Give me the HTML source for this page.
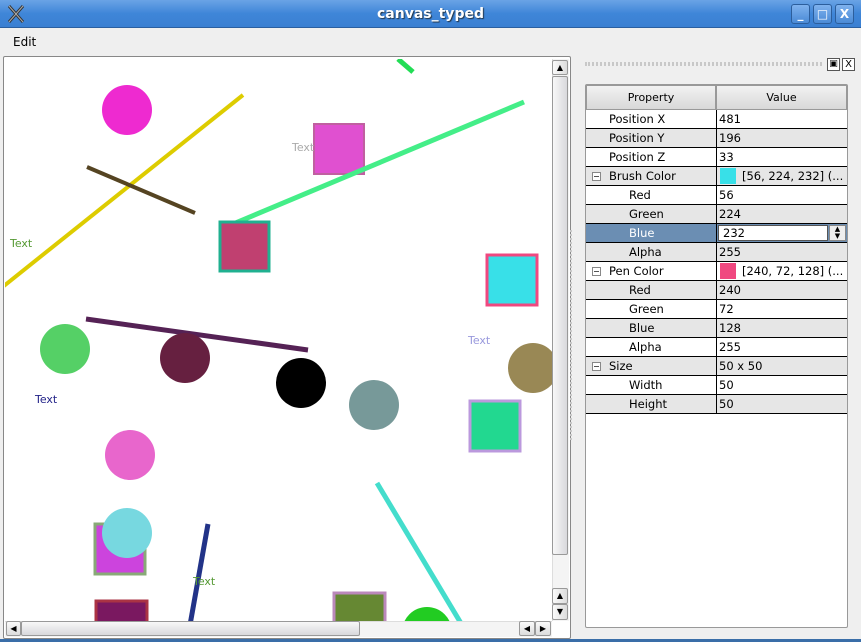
<!DOCTYPE html>
<html><head><style>
*{margin:0;padding:0;box-sizing:border-box}
body{width:861px;height:642px;background:#efefef;font-family:"DejaVu Sans","Liberation Sans",sans-serif;font-size:11px;position:relative;overflow:hidden}
.abs{position:absolute}
#title{left:0;top:0;width:861px;height:28px;background:linear-gradient(#6aa3e6,#3f86d8 50%,#3a7fd2);border-bottom:1px solid #2a5fa0}
#title .t{position:absolute;left:0;right:0;top:6px;text-align:center;color:#fff;font-weight:bold;font-size:14px;text-shadow:1px 1px 1px #234}
.wb{position:absolute;top:4px;width:19px;height:20px;border:1px solid #2c5e9c;border-radius:3px;background:linear-gradient(#7fb2ee,#4a8ad6);color:#fff;font-size:12px;text-align:center;line-height:18px;font-weight:bold}
#menu{left:0;top:28px;width:861px;height:28px;font-size:12px}
.grid{left:585px;top:84px;width:263px;height:544px;background:#fff;border:1px solid #999;border-radius:2px}
.row{position:absolute;left:0;width:261px;height:19px;border-bottom:1px solid #000;font-size:11.5px;line-height:18px}
.row .p{position:absolute;left:0;width:130px;height:18px}
.row .v{position:absolute;left:130px;width:131px;height:18px;border-left:1px solid #000;padding-left:2px}
.g{background:#e6e6e6}
.ex{position:absolute;left:6px;top:5px;width:9px;height:9px;border:1px solid #888;background:#fff}
.ex:after{content:"";position:absolute;left:1px;top:3px;width:5px;height:1px;background:#555}
.sw{display:inline-block;width:16px;height:16px;vertical-align:top;margin:1px 6px 0 1px}
</style></head><body>
<div id="title" class="abs">
<svg class="abs" style="left:6px;top:4px" width="20" height="20"><path d="M3 2 L17 18 M17 2 L3 18" stroke="#333" stroke-width="3"/><path d="M3 2 L17 18 M17 2 L3 18" stroke="#aaa" stroke-width="1"/></svg>
<div class="t">canvas_typed</div>
<div class="wb" style="left:791px">_</div><div class="wb" style="left:813px">□</div><div class="wb" style="left:835px">X</div>
</div>
<div id="menu" class="abs"><span class="abs" style="left:13px;top:7px">Edit</span></div>
<div class="abs" style="left:3px;top:56px;width:568px;height:583px;border:1px solid #888;border-radius:2px;background:#fff"></div>
<svg class="abs" style="left:5px;top:59px" width="547" height="562">
<g transform="translate(-5,-59)">
<line x1="398" y1="59" x2="413" y2="72" stroke="#22dd55" stroke-width="5"/>
<circle cx="127" cy="110" r="25" fill="#ee2ad0"/>
<line x1="0" y1="289" x2="243" y2="95" stroke="#ddcc00" stroke-width="4"/>
<rect x="314" y="124" width="50" height="50" fill="#e050d0" stroke="#c060a0" stroke-width="2"/>
<text x="292" y="151" fill="#aaa" font-size="11" font-family="DejaVu Sans">Text</text>
<line x1="233" y1="224" x2="524" y2="102" stroke="#44ee88" stroke-width="5"/>
<line x1="87" y1="167" x2="195" y2="213" stroke="#554422" stroke-width="4"/>
<rect x="220" y="222" width="49" height="49" fill="#c04070" stroke="#20b090" stroke-width="3"/>
<text x="10" y="247" fill="#559933" font-size="11" font-family="DejaVu Sans">Text</text>
<rect x="487" y="255" width="50" height="50" fill="#38e0e8" stroke="#f04880" stroke-width="3"/>
<line x1="86" y1="319" x2="308" y2="350" stroke="#552255" stroke-width="5"/>
<circle cx="65" cy="349" r="25" fill="#55d066"/>
<circle cx="185" cy="358" r="25" fill="#662040"/>
<circle cx="301" cy="383" r="25" fill="#000"/>
<circle cx="374" cy="405" r="25" fill="#779999"/>
<text x="468" y="344" fill="#9999dd" font-size="11" font-family="DejaVu Sans">Text</text>
<circle cx="533" cy="368" r="25" fill="#998855"/>
<text x="35" y="403" fill="#222288" font-size="11" font-family="DejaVu Sans">Text</text>
<rect x="470" y="401" width="50" height="50" fill="#22d890" stroke="#bb99dd" stroke-width="3"/>
<circle cx="130" cy="455" r="25" fill="#e866cc"/>
<line x1="377" y1="483" x2="462" y2="625" stroke="#44ddcc" stroke-width="5"/>
<rect x="95" y="524" width="50" height="50" fill="#cc44dd" stroke="#88aa77" stroke-width="3"/>
<circle cx="127" cy="533" r="25" fill="#77d8e0"/>
<line x1="208" y1="524" x2="190" y2="625" stroke="#223388" stroke-width="5"/>
<text x="193" y="585" fill="#559933" font-size="11" font-family="DejaVu Sans">Text</text>
<rect x="96" y="601" width="51" height="40" fill="#7a1860" stroke="#aa3344" stroke-width="3"/>
<rect x="334" y="593" width="51" height="40" fill="#668833" stroke="#bb88bb" stroke-width="3"/>
<circle cx="427" cy="632" r="25" fill="#22cc22"/>
</g></svg>
<!-- vertical scrollbar -->
<div class="abs" style="left:552px;top:59px;width:17px;height:562px;background:#f4f4f4;border-left:1px solid #ddd"></div>
<div class="abs" style="left:552px;top:60px;width:16px;height:15px;border:1px solid #999;border-radius:2px;background:linear-gradient(90deg,#fafafa,#dcdcdc);font-size:8px;text-align:center;line-height:13px">▲</div>
<div class="abs" style="left:552px;top:76px;width:16px;height:479px;border:1px solid #999;border-radius:2px;background:linear-gradient(90deg,#f8f8f8,#d8d8dc)"></div>
<div class="abs" style="left:552px;top:588px;width:16px;height:16px;border:1px solid #999;border-radius:2px;background:linear-gradient(90deg,#fafafa,#dcdcdc);font-size:8px;text-align:center;line-height:14px">▲</div>
<div class="abs" style="left:552px;top:604px;width:16px;height:16px;border:1px solid #999;border-radius:2px;background:linear-gradient(90deg,#fafafa,#dcdcdc);font-size:8px;text-align:center;line-height:14px">▼</div>
<!-- horizontal scrollbar -->
<div class="abs" style="left:5px;top:621px;width:547px;height:16px;background:#f4f4f4;border-top:1px solid #ddd"></div>
<div class="abs" style="left:6px;top:621px;width:15px;height:15px;border:1px solid #999;border-radius:2px;background:linear-gradient(#fafafa,#dcdcdc);font-size:8px;text-align:center;line-height:13px">◀</div>
<div class="abs" style="left:21px;top:621px;width:339px;height:15px;border:1px solid #999;border-radius:2px;background:linear-gradient(#f8f8f8,#d8d8dc)"></div>
<div class="abs" style="left:519px;top:621px;width:16px;height:15px;border:1px solid #999;border-radius:2px;background:linear-gradient(#fafafa,#dcdcdc);font-size:8px;text-align:center;line-height:13px">◀</div>
<div class="abs" style="left:535px;top:621px;width:16px;height:15px;border:1px solid #999;border-radius:2px;background:linear-gradient(#fafafa,#dcdcdc);font-size:8px;text-align:center;line-height:13px">▶</div>
<!-- dock -->
<div class="abs" style="left:585px;top:62px;width:237px;height:4px;border-top:2px dotted #c8c8c8;border-bottom:2px dotted #c8c8c8"></div>
<div class="abs" style="left:570px;top:230px;width:3px;height:210px;border-left:2px dotted #c8c8c8"></div>
<div class="abs" style="left:827px;top:58px;width:13px;height:13px;border:1px solid #555;font-size:9px;line-height:11px;text-align:center;background:#fff">▣</div>
<div class="abs" style="left:842px;top:58px;width:13px;height:13px;border:1px solid #555;font-size:10px;line-height:11px;text-align:center;background:#fff">X</div>
<div class="abs grid">
<div class="abs" style="left:0;top:0;width:130px;height:25px;border:1px solid #999;background:linear-gradient(#f2f2f2,#d8d8d8);text-align:center;line-height:23px">Property</div>
<div class="abs" style="left:130px;top:0;width:131px;height:25px;border:1px solid #999;background:linear-gradient(#f2f2f2,#d8d8d8);text-align:center;line-height:23px">Value</div>
<div class="row" style="top:25px"><div class="p" style="padding-left:23px">Position X</div><div class="v">481</div></div>
<div class="row g" style="top:44px"><div class="p" style="padding-left:23px">Position Y</div><div class="v">196</div></div>
<div class="row" style="top:63px"><div class="p" style="padding-left:23px">Position Z</div><div class="v">33</div></div>
<div class="row g" style="top:82px"><div class="p" style="padding-left:23px"><span class="ex"></span>Brush Color</div><div class="v"><span class="sw" style="background:#38e0e8"></span>[56, 224, 232] (...</div></div>
<div class="row" style="top:101px"><div class="p" style="padding-left:43px">Red</div><div class="v">56</div></div>
<div class="row g" style="top:120px"><div class="p" style="padding-left:43px">Green</div><div class="v">224</div></div>
<div class="row" style="top:139px;background:#6b8eb3"><div class="p" style="padding-left:43px;color:#fff">Blue</div><div class="v" style="padding:0"><div class="abs" style="left:1px;top:1px;width:110px;height:16px;background:#fff;border:1px solid #555;padding-left:4px;line-height:14px">232</div><div class="abs" style="left:112px;top:1px;width:17px;height:16px;background:#eee;border:1px solid #888;font-size:7px;line-height:7px;text-align:center">▲<br>▼</div></div></div>
<div class="row g" style="top:158px"><div class="p" style="padding-left:43px">Alpha</div><div class="v">255</div></div>
<div class="row" style="top:177px"><div class="p" style="padding-left:23px"><span class="ex"></span>Pen Color</div><div class="v"><span class="sw" style="background:#f04880"></span>[240, 72, 128] (...</div></div>
<div class="row g" style="top:196px"><div class="p" style="padding-left:43px">Red</div><div class="v">240</div></div>
<div class="row" style="top:215px"><div class="p" style="padding-left:43px">Green</div><div class="v">72</div></div>
<div class="row g" style="top:234px"><div class="p" style="padding-left:43px">Blue</div><div class="v">128</div></div>
<div class="row" style="top:253px"><div class="p" style="padding-left:43px">Alpha</div><div class="v">255</div></div>
<div class="row g" style="top:272px"><div class="p" style="padding-left:23px"><span class="ex"></span>Size</div><div class="v">50 x 50</div></div>
<div class="row" style="top:291px"><div class="p" style="padding-left:43px">Width</div><div class="v">50</div></div>
<div class="row g" style="top:310px"><div class="p" style="padding-left:43px">Height</div><div class="v">50</div></div>
</div>
<div class="abs" style="left:0;top:639px;width:861px;height:3px;background:#3a6ea8"></div>
</body></html>
